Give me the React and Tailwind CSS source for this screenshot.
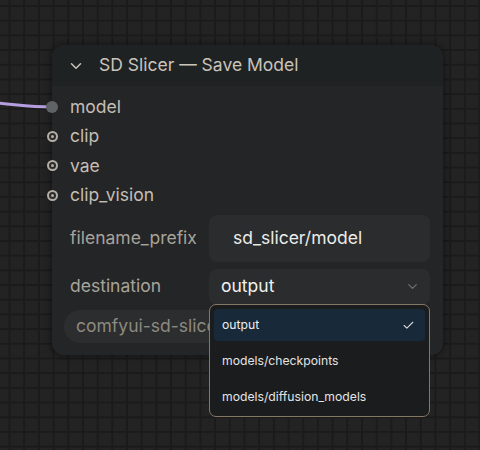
import React from "react";
import { ChevronDown, Check } from "lucide-react";

const inputs = ["model", "clip", "vae", "clip_vision"];
const options = ["output", "models/checkpoints", "models/diffusion_models"];

function Slot({ filled }) {
  if (filled) {
    return <span className="block w-[12px] h-[12px] rounded-full bg-[#5f6366]" />;
  }
  return (
    <span className="flex items-center justify-center w-[11px] h-[11px] rounded-full border-[2px] border-[#b3ada4] bg-[#2a2b2c]">
      <span className="block w-[3px] h-[3px] rounded-full bg-[#b3ada4]" />
    </span>
  );
}

export default function App() {
  return (
    <div
      className="relative w-[480px] h-[450px] overflow-hidden bg-[#232323] bg-[linear-gradient(to_right,#1b1b1b_2px,transparent_2px),linear-gradient(to_bottom,#1b1b1b_2px,transparent_2px)] bg-[size:14.7px_14.7px] bg-[position:8.5px_5px]"
      style={{ fontFamily: "Inter, 'Noto Sans', sans-serif" }}
    >
      {/* wire into model */}
      <svg className="absolute left-0 top-0" width="60" height="120">
        <path d="M -4 103 C 20 105, 30 107, 52 107" stroke="#b59de0" strokeWidth="3" fill="none" />
      </svg>

      {/* node */}
      <div className="absolute left-[52px] top-[45px] w-[391px] h-[310px] rounded-[12px] bg-[#242526] shadow-[0_0_6px_2px_rgba(0,0,0,0.35)] flex flex-col">
        <div className="h-[41px] shrink-0 flex items-center rounded-t-[12px] bg-[#1f2223] pl-[15px] gap-[14px]">
          <ChevronDown size={18} strokeWidth={2} className="text-[#c9c4bc]" />
          <span className="text-[17.5px] text-[#c9c4bc]">SD Slicer — Save Model</span>
        </div>

        <div className="pt-[6px] flex flex-col">
          {inputs.map((name, i) => (
            <div key={name} className="h-[29.5px] flex items-center">
              <div className="w-[12px] -ml-[6px] flex items-center justify-center">
                <Slot filled={i === 0} />
              </div>
              <span className="ml-[12px] text-[17.5px] text-[#c4beb5]">{name}</span>
            </div>
          ))}
        </div>

        <div className="flex flex-col pl-[18px] pr-[13px] mt-[4.5px]">
          <div className="h-[47px] flex items-center">
            <span className="w-[139px] text-[17.5px] text-[#a8a39b]">filename_prefix</span>
            <div className="flex-1 h-full rounded-[8px] bg-[#2a2c2e] flex items-center pl-[24px] text-[17.5px] text-[#ecebe8]">
              sd_slicer/model
            </div>
          </div>
          <div className="h-[36px] mt-[7px] flex items-center">
            <span className="w-[139px] text-[17.5px] text-[#a8a39b]">destination</span>
            <div className="flex-1 h-full rounded-[8px] bg-[#2a2c2e] flex items-center justify-between pl-[12px] pr-[10px] text-[17.5px] text-[#f2f1ee]">
              <span>output</span>
              <ChevronDown size={15} strokeWidth={2} className="text-[#6d6f71]" />
            </div>
          </div>
        </div>

        <div className="mt-[5px] ml-[12px] self-start h-[33px] rounded-full bg-[#2b2d2f] flex items-center pl-[12px] pr-[16px] text-[17.5px] text-[#8e8981]">
          comfyui-sd-slicer
        </div>
      </div>

      {/* dropdown menu */}
      <div className="absolute left-[209px] top-[304px] w-[221px] h-[113px] rounded-[7px] border border-[#837866] bg-[#1b1c1e] p-[4px] flex flex-col gap-[4px]">
        {options.map((opt, i) => (
          <div
            key={opt}
            className={
              i === 0
                ? "h-[32px] shrink-0 rounded-[4px] bg-[#182a3a] flex items-center justify-between pl-[8px] pr-[10px] text-[12.2px] text-[#eeeeee]"
                : "h-[32px] shrink-0 flex items-center pl-[8px] text-[12.2px] text-[#e4e4e4]"
            }
          >
            <span>{opt}</span>
            {i === 0 && <Check size={13} strokeWidth={2} className="text-[#d6d6d6]" />}
          </div>
        ))}
      </div>
    </div>
  );
}
